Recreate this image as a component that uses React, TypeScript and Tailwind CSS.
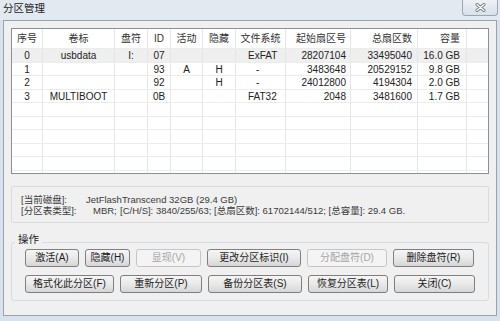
import React from 'react';

type Row = {
  no: string;
  label: string;
  drive: string;
  id: string;
  active: string;
  hidden: string;
  fs: string;
  start: string;
  total: string;
  size: string;
};

const rows: Row[] = [
  {no: '0', label: 'usbdata', drive: 'I:', id: '07', active: '', hidden: '', fs: 'ExFAT', start: '28207104', total: '33495040', size: '16.0 GB'},
  {no: '1', label: '', drive: '', id: '93', active: 'A', hidden: 'H', fs: '-', start: '3483648', total: '20529152', size: '9.8 GB'},
  {no: '2', label: '', drive: '', id: '92', active: '', hidden: 'H', fs: '-', start: '24012800', total: '4194304', size: '2.0 GB'},
  {no: '3', label: 'MULTIBOOT', drive: '', id: '0B', active: '', hidden: '', fs: 'FAT32', start: '2048', total: '3481600', size: '1.7 GB'},
];

// 每行的高度（原图大约 13.4px 一行）
const rowHeights = ['h-[14px]', 'h-[13px]', 'h-[14px]', 'h-[13px]', 'h-[14px]', 'h-[13px]', 'h-[14px]', 'h-[13px]', 'h-[14px]'];

const gridCols = 'grid grid-cols-[31px_72px_33px_23px_32px_33px_50px_65px_67px_49px_1fr]';
const cell = 'border-r border-[#e6e6e6] flex items-center overflow-hidden whitespace-nowrap';

function TableRow({row, h, selected}: {row?: Row; h: string; selected?: boolean}) {
  return (
    <div className={`${gridCols} ${h} border-b border-[#ececec] ${selected ? 'bg-[#efefef]' : ''}`}>
      <div className={`${cell} justify-center`}>{row?.no}</div>
      <div className={`${cell} justify-center`}>{row?.label}</div>
      <div className={`${cell} justify-center`}>{row?.drive}</div>
      <div className={`${cell} justify-center`}>{row?.id}</div>
      <div className={`${cell} justify-center`}>{row?.active}</div>
      <div className={`${cell} justify-center`}>{row?.hidden}</div>
      <div className={`${cell} ${row?.fs === '-' ? 'pl-[20px]' : 'pl-[12px]'}`}>{row?.fs}</div>
      <div className={`${cell} justify-end pr-[4px]`}>{row?.start}</div>
      <div className={`${cell} justify-end pr-[5px]`}>{row?.total}</div>
      <div className={`${cell} justify-end pr-[6px]`}>{row?.size}</div>
      <div />
    </div>
  );
}

function WinButton({label, w, disabled}: {label: string; w: string; disabled?: boolean}) {
  return (
    <button
      disabled={disabled}
      className={`${w} h-[18px] rounded-[3px] border text-[10px] leading-none ${
        disabled
          ? 'border-[#c3c7ca] bg-[#f4f4f4] text-[#a6a6a6]'
          : 'border-[#7f7f7f] bg-gradient-to-b from-[#f5f5f5] via-[#e9e9e9] to-[#d6d6d6] text-[#1e1e1e]'
      }`}
    >
      {label}
    </button>
  );
}

export default function App() {
  return (
    <div className="w-[500px] h-[321px] overflow-hidden bg-[#d9e2ec] font-['Liberation_Sans','Noto_Sans_CJK_SC',sans-serif] text-[#222]">
      {/* 标题栏 */}
      <div className="flex h-[20px] items-start justify-between bg-[#e3e9f0] pr-[2px]">
        <div className="pl-[3px] pt-[2px] text-[10.5px] leading-[12px] text-[#1a1a1a]">分区管理</div>
        <div className="flex h-[16px] w-[36px] items-center justify-center rounded-b-[4px] border border-t-0 border-[#9aa6b4] bg-gradient-to-b from-[#eef2f6] to-[#d9e0e8]">
          <svg width="11" height="9" viewBox="0 0 11 9">
            <path d="M2 1.5 L9 7.5 M9 1.5 L2 7.5" stroke="#6f7b88" strokeWidth="3" strokeLinecap="round" />
            <path d="M2 1.5 L9 7.5 M9 1.5 L2 7.5" stroke="#ffffff" strokeWidth="1.3" strokeLinecap="round" />
          </svg>
        </div>
      </div>

      {/* 窗口主体 */}
      <div className="mx-[3px] flex h-[296px] flex-col border border-[#97a3b1] bg-[#f0f0f0] px-[7px] pt-[7px]">
        {/* 分区列表 */}
        <div className="flex h-[146px] flex-col overflow-hidden border border-[#8a9099] bg-white text-[10px]">
          <div className={`${gridCols} h-[20px] shrink-0 border-b border-[#ececec] text-[#333]`}>
            <div className={`${cell} justify-center`}>序号</div>
            <div className={`${cell} justify-center`}>卷标</div>
            <div className={`${cell} justify-center`}>盘符</div>
            <div className={`${cell} justify-center`}>ID</div>
            <div className={`${cell} justify-center`}>活动</div>
            <div className={`${cell} justify-center`}>隐藏</div>
            <div className={`${cell} justify-center`}>文件系统</div>
            <div className={`${cell} justify-end pr-[4px]`}>起始扇区号</div>
            <div className={`${cell} justify-end pr-[5px]`}>总扇区数</div>
            <div className={`${cell} justify-end pr-[6px]`}>容量</div>
            <div />
          </div>
          {rowHeights.map((h, i) => (
            <TableRow key={i} row={rows[i]} h={`${h} shrink-0`} selected={i === 0} />
          ))}
          <div className={`${gridCols} flex-1`}>
            {Array.from({length: 10}).map((_, i) => (
              <div key={i} className="border-r border-[#e6e6e6]" />
            ))}
            <div />
          </div>
        </div>

        {/* 磁盘信息 */}
        <div className="mt-[12px] h-[37px] rounded-[2px] border border-[#dadada] pl-[9px] pt-[7px] text-[9.5px] leading-[11px] text-[#3a3a3a]">
          <div className="flex whitespace-nowrap">
            <span className="w-[65px] shrink-0">[当前磁盘]:</span>
            <span>JetFlashTranscend 32GB (29.4 GB)</span>
          </div>
          <div className="flex whitespace-nowrap">
            <span className="w-[72px] shrink-0">[分区表类型]:</span>
            <span className="w-[27px] shrink-0">MBR;</span>
            <span>[C/H/S]: 3840/255/63; [总扇区数]: 61702144/512; [总容量]: 29.4 GB.</span>
          </div>
        </div>

        {/* 操作 */}
        <div className="relative z-10 -mb-[3px] ml-[4px] mt-[10px] w-fit bg-[#f0f0f0] px-[3px] text-[10.5px] leading-[12px] text-[#222]">
          操作
        </div>
        <div className="flex flex-col gap-[8px] rounded-[3px] border border-[#d5dce2] pb-[7px] pl-[13px] pt-[6px]">
          <div className="flex gap-[6px]">
            <WinButton label="激活(A)" w="w-[54px]" />
            <WinButton label="隐藏(H)" w="w-[45px]" />
            <WinButton label="显现(V)" w="w-[65px]" disabled />
            <WinButton label="更改分区标识(I)" w="w-[94px]" />
            <WinButton label="分配盘符(D)" w="w-[80px]" disabled />
            <WinButton label="删除盘符(R)" w="w-[81px]" />
          </div>
          <div className="flex gap-[6px]">
            <WinButton label="格式化此分区(F)" w="w-[89px]" />
            <WinButton label="重新分区(P)" w="w-[82px]" />
            <WinButton label="备份分区表(S)" w="w-[94px]" />
            <WinButton label="恢复分区表(L)" w="w-[80px]" />
            <WinButton label="关闭(C)" w="w-[81px]" />
          </div>
        </div>
      </div>
    </div>
  );
}
